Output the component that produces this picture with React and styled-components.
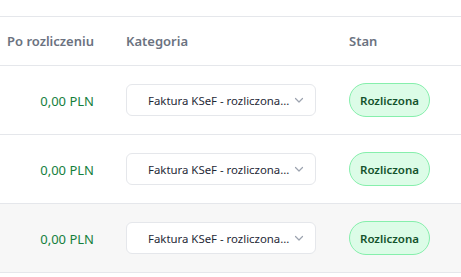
import React from "react";
import styled, { createGlobalStyle } from "styled-components";

const Global = createGlobalStyle`
  html, body { margin: 0; padding: 0; background: #ffffff; }
  body { font-family: "Noto Sans", "Open Sans", sans-serif; }
`;

const Wrap = styled.div`
  padding-top: 16px;
  width: 461px;
  overflow: hidden;
`;

const Table = styled.table`
  width: 461px;
  border-collapse: collapse;
  table-layout: fixed;
  border-top: 1px solid #e5e7eb;
`;

const HeadCell = styled.th`
  height: 48px;
  padding: ${(p) => (p.$right ? "0 16px 0 0" : "0 16px")};
  font-size: 13px;
  font-weight: 600;
  color: #6b7280;
  text-align: ${(p) => (p.$right ? "right" : "left")};
  border-bottom: 1px solid #e5e7eb;
  white-space: nowrap;
`;

const Row = styled.tr`
  background: ${(p) => (p.$hover ? "#f7f7f7" : "#ffffff")};
  border-bottom: 1px solid #e5e7eb;
`;

const Cell = styled.td`
  height: 68px;
  padding: ${(p) => (p.$right ? "0 16px 0 0" : "0 16px")};
  text-align: ${(p) => (p.$right ? "right" : "left")};
  vertical-align: middle;
  white-space: nowrap;
`;

const Amount = styled.span`
  font-size: 13px;
  color: #15803d;
`;

const Select = styled.div`
  box-sizing: border-box;
  width: 190px;
  height: 32px;
  display: flex;
  align-items: center;
  padding: 0 10px 0 21px;
  background: #ffffff;
  border: 1px solid #e5e7eb;
  border-radius: 6px;
  font-size: 11.4px;
  color: #1f2937;
  gap: 3px;
`;

const SelectText = styled.span`
  flex: 1;
  overflow: hidden;
  white-space: nowrap;
`;

const Badge = styled.span`
  box-sizing: border-box;
  display: inline-flex;
  align-items: center;
  justify-content: center;
  height: 34px;
  padding: 0 10px;
  border-radius: 17px;
  background: #dcfce7;
  border: 1px solid #86efac;
  color: #14532d;
  font-size: 11.5px;
  font-weight: 600;
`;

const Chevron = () => (
  <svg width="12" height="12" viewBox="0 0 12 12" fill="none">
    <path d="M2.5 4.5 L6 8 L9.5 4.5" stroke="#9ca3af" strokeWidth="1.2" strokeLinecap="round" strokeLinejoin="round" />
  </svg>
);

const rows = [{ hover: false }, { hover: false }, { hover: true }];

export default function App() {
  return (
    <>
      <Global />
      <Wrap>
        <Table>
          <colgroup>
            <col style={{ width: 110 }} />
            <col style={{ width: 223 }} />
            <col />
          </colgroup>
          <thead>
            <tr>
              <HeadCell $right>Po rozliczeniu</HeadCell>
              <HeadCell>Kategoria</HeadCell>
              <HeadCell>Stan</HeadCell>
            </tr>
          </thead>
          <tbody>
            {rows.map((r, i) => (
              <Row key={i} $hover={r.hover}>
                <Cell $right>
                  <Amount>0,00 PLN</Amount>
                </Cell>
                <Cell>
                  <Select>
                    <SelectText>Faktura KSeF - rozliczona...</SelectText>
                    <Chevron />
                  </Select>
                </Cell>
                <Cell>
                  <Badge>Rozliczona</Badge>
                </Cell>
              </Row>
            ))}
          </tbody>
        </Table>
      </Wrap>
    </>
  );
}
